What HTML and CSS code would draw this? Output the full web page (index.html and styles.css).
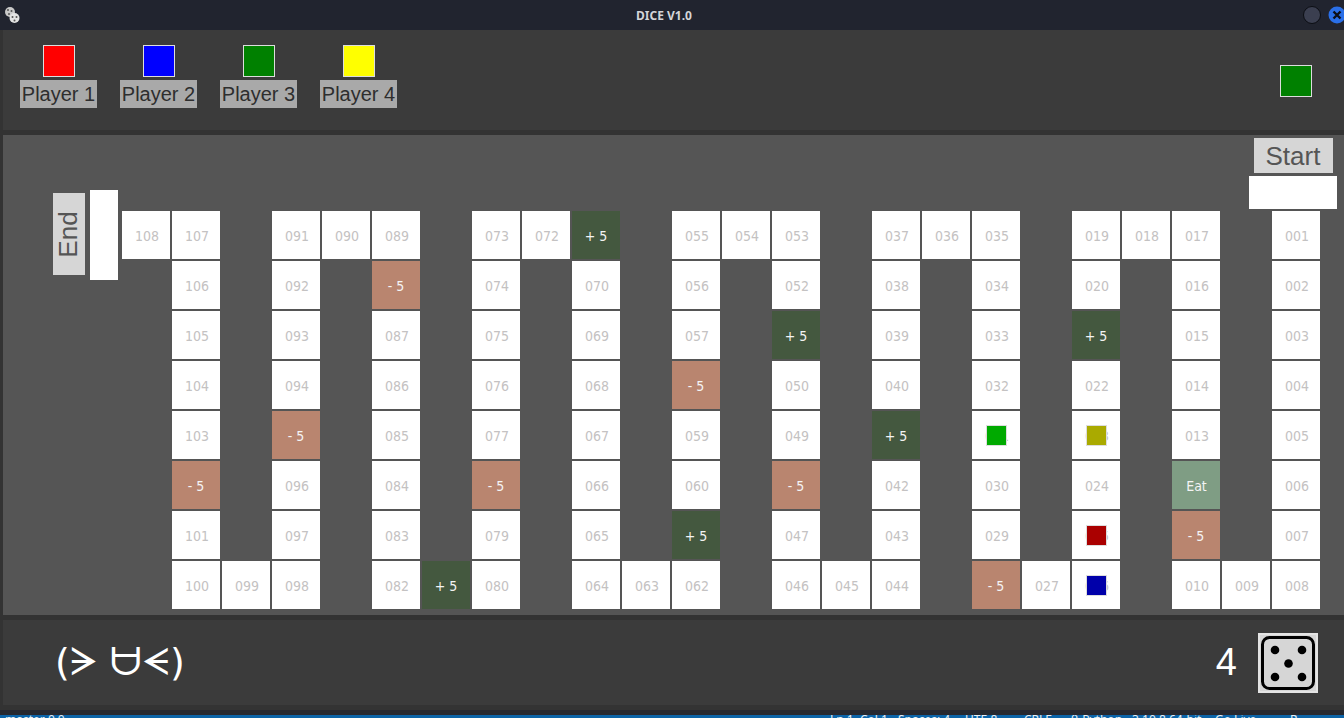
FILE: index.html
```html
<!DOCTYPE html>
<html lang="en">
<head>
    <meta charset="UTF-8">
    <title>DICE V1.0</title>
    <link rel="stylesheet" href="styles.css">
</head>
<body>
<div class="titlebar">
    <svg class="app-icon" width="16" height="18" viewBox="0 0 16 18">
        <circle cx="6" cy="6" r="5" fill="#c9c9c9"/>
        <circle cx="10.5" cy="12" r="5" fill="#e4e4e4"/>
        <circle cx="4" cy="4" r="1" fill="#555"/>
        <circle cx="7.5" cy="5" r="1" fill="#555"/>
        <circle cx="5" cy="8" r="1" fill="#555"/>
        <circle cx="8.5" cy="11" r="1" fill="#555"/>
        <circle cx="12.5" cy="11" r="1" fill="#555"/>
        <circle cx="10.5" cy="14.5" r="1" fill="#555"/>
    </svg>
    <span class="title">DICE V1.0</span>
    <div class="win-buttons">
        <span class="win-btn"></span>
        <svg class="win-close" width="18" height="18" viewBox="0 0 18 18">
            <circle cx="9" cy="9" r="8.5" fill="#2a6fe8"/>
            <path d="M5.5 5.5l7 7M12.5 5.5l-7 7" stroke="#0c0f18" stroke-width="2.4"/>
        </svg>
    </div>
</div>

<div class="panel players">
    <div class="player">
        <span class="swatch red"></span>
        <span class="player-name">Player 1</span>
    </div>
    <div class="player">
        <span class="swatch blue"></span>
        <span class="player-name">Player 2</span>
    </div>
    <div class="player">
        <span class="swatch green"></span>
        <span class="player-name">Player 3</span>
    </div>
    <div class="player">
        <span class="swatch yellow"></span>
        <span class="player-name">Player 4</span>
    </div>
    <span class="swatch green turn"></span>
</div>

<div class="board">
    <div class="end-label"><span>End</span></div>
    <div class="end-box"></div>
    <div class="start-group">
        <div class="start-label">Start</div>
        <div class="start-box"></div>
    </div>
    <div class="track">
        <div class="col">
            <div class="cell">108</div>
        </div>
        <div class="col">
            <div class="cell">107</div>
            <div class="cell">106</div>
            <div class="cell">105</div>
            <div class="cell">104</div>
            <div class="cell">103</div>
            <div class="cell minus">- 5</div>
            <div class="cell">101</div>
            <div class="cell">100</div>
        </div>
        <div class="col low">
            <div class="cell">099</div>
        </div>
        <div class="col">
            <div class="cell">091</div>
            <div class="cell">092</div>
            <div class="cell">093</div>
            <div class="cell">094</div>
            <div class="cell minus">- 5</div>
            <div class="cell">096</div>
            <div class="cell">097</div>
            <div class="cell">098</div>
        </div>
        <div class="col">
            <div class="cell">090</div>
        </div>
        <div class="col">
            <div class="cell">089</div>
            <div class="cell minus">- 5</div>
            <div class="cell">087</div>
            <div class="cell">086</div>
            <div class="cell">085</div>
            <div class="cell">084</div>
            <div class="cell">083</div>
            <div class="cell">082</div>
        </div>
        <div class="col low">
            <div class="cell plus">+ 5</div>
        </div>
        <div class="col">
            <div class="cell">073</div>
            <div class="cell">074</div>
            <div class="cell">075</div>
            <div class="cell">076</div>
            <div class="cell">077</div>
            <div class="cell minus">- 5</div>
            <div class="cell">079</div>
            <div class="cell">080</div>
        </div>
        <div class="col">
            <div class="cell">072</div>
        </div>
        <div class="col">
            <div class="cell plus">+ 5</div>
            <div class="cell">070</div>
            <div class="cell">069</div>
            <div class="cell">068</div>
            <div class="cell">067</div>
            <div class="cell">066</div>
            <div class="cell">065</div>
            <div class="cell">064</div>
        </div>
        <div class="col low">
            <div class="cell">063</div>
        </div>
        <div class="col">
            <div class="cell">055</div>
            <div class="cell">056</div>
            <div class="cell">057</div>
            <div class="cell minus">- 5</div>
            <div class="cell">059</div>
            <div class="cell">060</div>
            <div class="cell plus">+ 5</div>
            <div class="cell">062</div>
        </div>
        <div class="col">
            <div class="cell">054</div>
        </div>
        <div class="col">
            <div class="cell">053</div>
            <div class="cell">052</div>
            <div class="cell plus">+ 5</div>
            <div class="cell">050</div>
            <div class="cell">049</div>
            <div class="cell minus">- 5</div>
            <div class="cell">047</div>
            <div class="cell">046</div>
        </div>
        <div class="col low">
            <div class="cell">045</div>
        </div>
        <div class="col">
            <div class="cell">037</div>
            <div class="cell">038</div>
            <div class="cell">039</div>
            <div class="cell">040</div>
            <div class="cell plus">+ 5</div>
            <div class="cell">042</div>
            <div class="cell">043</div>
            <div class="cell">044</div>
        </div>
        <div class="col">
            <div class="cell">036</div>
        </div>
        <div class="col">
            <div class="cell">035</div>
            <div class="cell">034</div>
            <div class="cell">033</div>
            <div class="cell">032</div>
            <div class="cell">031<span class="token t-green"></span></div>
            <div class="cell">030</div>
            <div class="cell">029</div>
            <div class="cell minus">- 5</div>
        </div>
        <div class="col low">
            <div class="cell">027</div>
        </div>
        <div class="col">
            <div class="cell">019</div>
            <div class="cell">020</div>
            <div class="cell plus">+ 5</div>
            <div class="cell">022</div>
            <div class="cell">023<span class="token t-yellow"></span></div>
            <div class="cell">024</div>
            <div class="cell">025<span class="token t-red"></span></div>
            <div class="cell">026<span class="token t-blue"></span></div>
        </div>
        <div class="col">
            <div class="cell">018</div>
        </div>
        <div class="col">
            <div class="cell">017</div>
            <div class="cell">016</div>
            <div class="cell">015</div>
            <div class="cell">014</div>
            <div class="cell">013</div>
            <div class="cell eat">Eat</div>
            <div class="cell minus">- 5</div>
            <div class="cell">010</div>
        </div>
        <div class="col low">
            <div class="cell">009</div>
        </div>
        <div class="col">
            <div class="cell">001</div>
            <div class="cell">002</div>
            <div class="cell">003</div>
            <div class="cell">004</div>
            <div class="cell">005</div>
            <div class="cell">006</div>
            <div class="cell">007</div>
            <div class="cell">008</div>
        </div>
    </div>
</div>

<div class="panel controls">
    <span class="face">(ᗒ ᗨᗕ)</span>
    <span class="roll">4</span>
    <div class="die">
        <svg width="56" height="56" viewBox="0 0 56 56">
            <rect x="2.5" y="2.5" width="51" height="51" rx="7" fill="none" stroke="#000" stroke-width="3"/>
            <circle cx="15" cy="15" r="4.3"/>
            <circle cx="42" cy="15" r="4.3"/>
            <circle cx="28.5" cy="28.5" r="4.3"/>
            <circle cx="15" cy="42" r="4.3"/>
            <circle cx="42" cy="42" r="4.3"/>
        </svg>
    </div>
</div>

<div class="statusbar">
    <span class="status-left">master 0 0</span>
    <span class="status-item ln">Ln 1, Col 1</span>
    <span class="status-item sp">Spaces: 4</span>
    <span class="status-item ut">UTF-8</span>
    <span class="status-item cr">CRLF</span>
    <span class="status-item py">{} Python</span>
    <span class="status-item ver">3.10.8 64-bit</span>
    <span class="status-item live">Go Live</span>
    <span class="status-item end">R</span>
</div>
</body>
</html>
```

FILE: styles.css
```css
html,body{
    margin:0;
    padding:0;
}
body{
    width:1344px;
    height:718px;
    overflow:hidden;
    background-color:#333;
    font-family:"Liberation Sans",sans-serif;
}

.titlebar{
    height:30px;
    background-color:#21242f;
    position:relative;
    display:flex;
    align-items:center;
    justify-content:center;
}
.app-icon{
    position:absolute;
    left:4px;
    top:6px;
}
.title{
    font-family:"Noto Sans",sans-serif;
    font-size:12px;
    font-weight:700;
    color:#d4d5d9;
    margin-left:-16px;
}
.win-buttons{
    position:absolute;
    right:-2px;
    top:6px;
    display:flex;
    gap:7px;
}
.win-btn{
    width:16px;
    height:16px;
    border-radius:50%;
    background-color:#3b3f50;
    border:1px solid #0c0e14;
}

.panel{
    margin-left:3px;
    background-color:#3b3b3b;
    display:flex;
    align-items:center;
}

.players{
    height:100px;
    padding:15px 32px 0 17px;
    box-sizing:border-box;
    align-items:flex-start;
    gap:23px;
}
.player{
    width:77px;
    display:flex;
    flex-direction:column;
    align-items:center;
    gap:3px;
}
.player-name{
    width:77px;
    height:28px;
    line-height:28px;
    background-color:#a9a9a9;
    color:#2e2e2e;
    font-size:20px;
    text-align:center;
}
.swatch{
    display:block;
    width:30px;
    height:30px;
    border:1px solid #ddd;
}
.red{background-color:#f00;}
.blue{background-color:#00f;}
.green{background-color:#008000;}
.yellow{background-color:#ff0;}
.turn{
    margin-left:auto;
    margin-top:20px;
}

.board{
    margin:5px 0 5px 3px;
    height:480px;
    box-sizing:border-box;
    padding-top:3px;
    background-color:#555;
    display:grid;
    grid-template-columns:50px 37px 32px 1fr;
    grid-template-rows:52px 21px 1fr;
}
.end-label{
    grid-column:2;
    grid-row:2 / 4;
    margin-top:3px;
    width:32px;
    height:82px;
    background-color:#d6d6d6;
    color:#555;
    font-size:26px;
    display:flex;
    align-items:center;
    justify-content:center;
}
.end-label span{
    transform:rotate(-90deg);
    margin-left:-2px;
}
.end-box{
    grid-column:3;
    grid-row:2 / 4;
    width:28px;
    height:90px;
    background-color:#fff;
}
.start-group{
    grid-column:4;
    grid-row:1 / 3;
    justify-self:end;
    margin-right:7px;
    width:88px;
    display:flex;
    flex-direction:column;
    align-items:center;
    gap:3px;
}
.start-label{
    width:79px;
    height:35px;
    line-height:36px;
    background-color:#d6d6d6;
    color:#555;
    font-size:26px;
    text-align:center;
}
.start-box{
    width:88px;
    height:33px;
    background-color:#fff;
}

.track{
    grid-column:4;
    grid-row:3;
    display:flex;
    align-items:stretch;
    gap:2px;
    height:398px;
}
.col{
    width:48px;
    display:flex;
    flex-direction:column;
    gap:2px;
}
.col.low{
    justify-content:flex-end;
}
.cell{
    position:relative;
    width:48px;
    height:48px;
    line-height:50px;
    padding-left:2px;
    box-sizing:border-box;
    text-align:center;
    background-color:#fff;
    color:#c4c2c2;
    font-family:"DejaVu Sans Condensed","DejaVu Sans",sans-serif;
    font-stretch:condensed;
    font-size:14px;
}
.plus,.minus,.eat{
    color:#f4f4f4;
    padding:0;
}
.eat{
    padding-left:1px;
}
.plus{background-color:#44583f;}
.minus{background-color:#b9856f;}
.eat{background-color:#7f9d84;}

.token{
    position:absolute;
    left:14px;
    top:14px;
    width:19px;
    height:19px;
    border:1px solid #ddd;
}
.t-green{background-color:#0a0;}
.t-yellow{background-color:#aa0;}
.t-red{background-color:#a00;}
.t-blue{background-color:#00a;}

.controls{
    height:85px;
    padding:0 26px 0 52px;
    box-sizing:border-box;
    color:#fff;
}
.face{
    font-family:"DejaVu Sans",sans-serif;
    font-size:38px;
}
.roll{
    margin-left:auto;
    font-size:38px;
}
.die{
    margin-left:21px;
    width:56px;
    height:56px;
    border:2px solid #e4e4e4;
    background-color:#d6d6d6;
    display:flex;
}

.statusbar{
    margin-top:5px;
    height:3px;
    border-top:5px solid #262830;
    background-color:#0b63a8;
    color:#e8f0f6;
    font-family:"Noto Sans",sans-serif;
    font-size:12px;
    line-height:9px;
    overflow:hidden;
    display:flex;
}
.status-left{
    margin-right:auto;
    padding-left:5px;
}
.status-item{
    white-space:nowrap;
}
.ln{width:68px;}
.sp{width:67px;}
.ut{width:59px;}
.cr{width:46px;}
.py{width:62px;}
.ver{width:83px;}
.live{width:75px;}
.end{width:54px;}
```
